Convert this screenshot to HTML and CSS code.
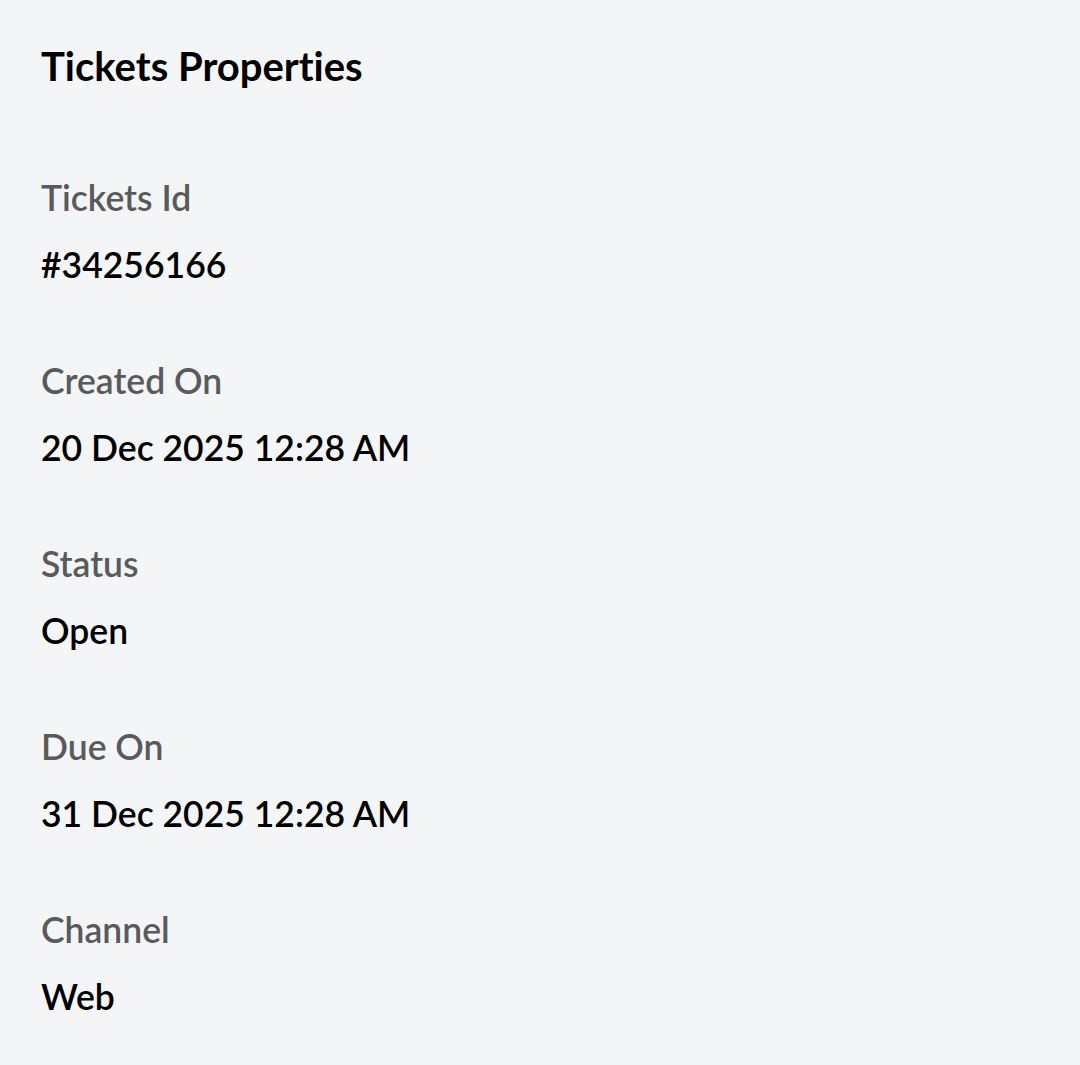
FILE: index.html
```html
<!DOCTYPE html>
<html lang="en">
<head>
  <meta charset="UTF-8">
  <title>Tickets Properties</title>
  <link rel="stylesheet" href="styles.css">
</head>
<body>

  <!-- Ticket properties panel -->
  <div class="panel">
    <h2 class="panel-title">Tickets Properties</h2>

    <div class="prop">
      <div class="prop-label">Tickets Id</div>
      <div class="prop-value">#34256166</div>
    </div>

    <div class="prop">
      <div class="prop-label">Created On</div>
      <div class="prop-value">20 Dec 2025 12:28 AM</div>
    </div>

    <div class="prop">
      <div class="prop-label">Status</div>
      <div class="prop-value">Open</div>
    </div>

    <div class="prop">
      <div class="prop-label">Due On</div>
      <div class="prop-value">31 Dec 2025 12:28 AM</div>
    </div>

    <div class="prop">
      <div class="prop-label">Channel</div>
      <div class="prop-value">Web</div>
    </div>
  </div>

</body>
</html>
```

FILE: styles.css
```css
* {
  box-sizing: border-box;
}

body {
  margin: 0;
  background: #f4f5f7;
  font-family: Lato, 'Noto Sans', sans-serif;
  font-variant-ligatures: none;
  min-height: 100vh;
}

.panel {
  padding: 40px 41px 20px;
}

.panel-title {
  margin: 0 0 84px;
  font-size: 40px;
  line-height: 52px;
  font-weight: 700;
  color: #000;
}

.prop {
  margin-bottom: 72px;
}

.prop:last-child {
  margin-bottom: 0;
}

.prop-label {
  font-size: 35.5px;
  line-height: 44px;
  font-weight: 600;
  color: #5a5a5c;
  margin-bottom: 23px;
}

.prop-value {
  font-size: 35.5px;
  line-height: 44px;
  font-weight: 600;
  color: #000;
}
```
